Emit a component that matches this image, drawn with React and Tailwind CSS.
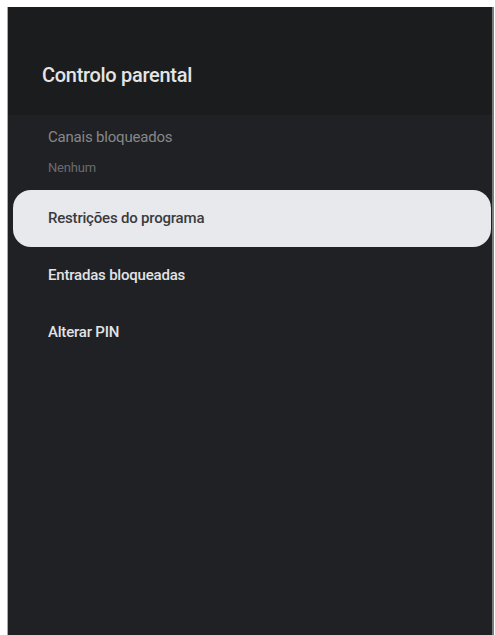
import React from "react";

const items = [
  { label: "Restrições do programa", active: true },
  { label: "Entradas bloqueadas" },
  { label: "Alterar PIN" },
];

export default function App() {
  return (
    <div
      className="h-[635px] w-[495px] overflow-hidden bg-white pl-[7px] pr-[1px] pt-[7px]"
      style={{ fontFamily: "Roboto, 'Noto Sans', sans-serif" }}
    >
      <div className="flex h-full flex-col border-l border-r-2 border-l-[#a8a8a8] border-r-[#7c7c7c] bg-[#202124]">
        {/* header */}
        <div className="h-[108px] shrink-0 bg-[#1b1c1e] pl-[34px] pt-[56px]">
          <h1 className="text-[20px] font-medium leading-[24px] tracking-[-0.3px] text-[#e4e5e6]">
            Controlo parental
          </h1>
        </div>

        {/* disabled entry */}
        <div className="flex flex-col gap-[13px] pb-[14px] pl-[40px] pt-[12px]">
          <span className="text-[15px] leading-[20px] tracking-[-0.2px] text-[#87888a]">
            Canais bloqueados
          </span>
          <span className="text-[13px] leading-[16px] tracking-[-0.2px] text-[#6b6c6e]">
            Nenhum
          </span>
        </div>

        {/* menu */}
        <ul className="flex flex-col">
          {items.map((item) => (
            <li
              key={item.label}
              className={`ml-[5px] mr-[1px] flex h-[57px] items-center pl-[35px] text-[15px] font-medium tracking-[-0.2px] ${
                item.active
                  ? "rounded-[18px] bg-[#e8e9ec] text-[#3a3b3e]"
                  : "text-[#e2e3e5]"
              }`}
            >
              {item.label}
            </li>
          ))}
        </ul>
      </div>
    </div>
  );
}
